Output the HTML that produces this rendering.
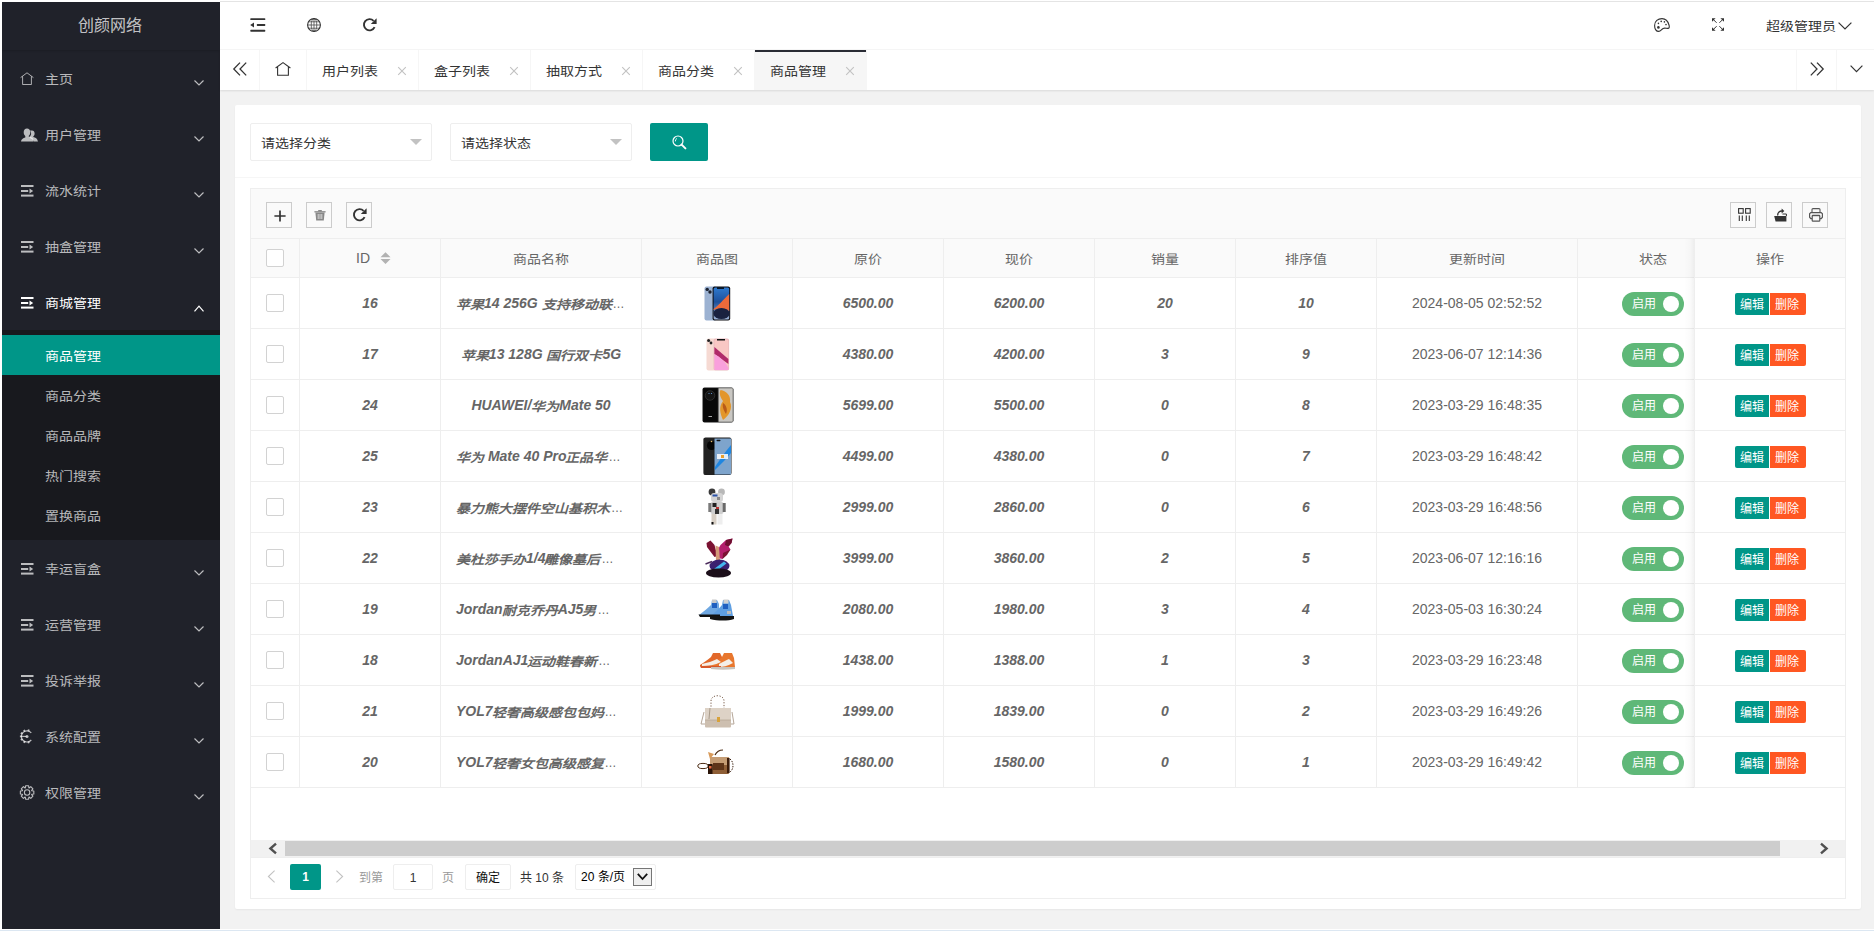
<!DOCTYPE html>
<html lang="zh-CN"><head><meta charset="utf-8"><title>商品管理</title>
<style>
*{box-sizing:border-box;margin:0;padding:0}
html,body{width:1874px;height:931px;overflow:hidden}
body{position:relative;background:#f2f2f2;font-family:'Liberation Sans',sans-serif;font-size:14px;color:#333}
.a{position:absolute}
.c{display:inline-block;line-height:14px;transform:translateY(1px) scaleY(.88);transform-origin:50% 13.6px}
.sw .c,.bt .c,.p12 .c,#logo .c{display:inline;transform:none;line-height:inherit}
svg{position:absolute;overflow:visible}
#side{left:0;top:0;width:220px;height:931px;background:#20222a}
#logo{left:0;top:0;width:220px;height:50px;line-height:52px;text-align:center;font-size:16px;color:rgba(255,255,255,.74);box-shadow:0 1px 2px 0 rgba(0,0,0,.15)}
.nav{left:0;width:220px;height:56px;line-height:56px;padding-left:45px;color:rgba(255,255,255,.7);font-size:14px}
.navw{color:#fff}
#sub{left:0;top:330px;width:220px;height:210px;background:#18191e}
.dd{left:0;width:220px;height:40px;line-height:40px;padding-left:45px;color:rgba(255,255,255,.7)}
.ddon{background:#009688;color:#fff}
#hdr{left:220px;top:0;width:1654px;height:50px;background:#fff;border-bottom:1px solid #f6f6f6}
#tabs{left:220px;top:50px;width:1654px;height:40px;background:#fff;box-shadow:0 1px 2px 0 rgba(0,0,0,.1)}
.tab{top:0;height:40px;line-height:40px;border-right:1px solid #f6f6f6;color:#333;padding-left:15px}
.tabon{background:#f6f6f6}
.tabon:before{content:'';position:absolute;left:0;top:0;width:100%;height:2px;background:#292b34}
.x{position:absolute;right:8px;top:13px;width:16px;height:16px}
#card{left:235px;top:105px;width:1626px;height:804px;background:#fff;border-radius:2px;box-shadow:0 1px 2px 0 rgba(0,0,0,.05)}
.sel{top:123px;width:182px;height:38px;border:1px solid #eee;border-radius:2px;background:#fff;line-height:36px;padding-left:10px;color:#333}
.tri{position:absolute;right:9px;top:15px;width:0;height:0;border-style:solid;border-width:6px 6px 0 6px;border-color:#c2c2c2 transparent transparent transparent}
#sbtn{left:650px;top:123px;width:58px;height:38px;background:#009688;border-radius:2px}
#hline{left:235px;top:177px;width:1626px;height:1px;background:#f6f6f6}
#tv{left:250px;top:188px;width:1596px;height:711px;border:1px solid #eee;background:#fff}
#tool{left:251px;top:189px;width:1594px;height:50px;background:#fafafa;border-bottom:1px solid #eee}
.tb{top:202px;width:26px;height:26px;border:1px solid #ccc}
#thead{left:251px;top:239px;width:1594px;height:39px;background:#fafafa;border-bottom:1px solid #eee;overflow:hidden}
.th,.td{position:absolute;top:0;height:100%;border-right:1px solid #eee;text-align:center;color:#666;white-space:nowrap;overflow:hidden}
.th{line-height:38px}
.row{position:absolute;left:0;width:1629px;height:51px;border-bottom:1px solid #eee;background:#fff}
.td{line-height:50px;font-weight:bold;font-style:italic}
.td.n{font-weight:normal;font-style:normal}
.td .cl{margin-left:-1px}
.el{font-weight:normal;font-style:normal;font-size:12px;letter-spacing:-0.5px;margin-left:1px}
.cb{position:absolute;left:16px;width:18px;height:18px;border:1px solid #d2d2d2;border-radius:2px;background:#fff}
.sw{position:absolute;top:14px;height:24px;width:62px;border-radius:20px;background:#5fb878;color:#fff;font-size:12px;font-style:normal;font-weight:normal;line-height:25px;text-align:left;padding-left:10px}
.sw i{position:absolute;right:5px;top:4px;width:16px;height:16px;border-radius:50%;background:#fff}
.bt{position:absolute;top:15px;height:22px;line-height:24px;font-size:12px;color:#fff;font-style:normal;font-weight:normal;padding:0 5px;border-radius:2px}
#fixr{left:1694px;top:239px;width:151px;height:549px;border-left:1px solid #eee;overflow:hidden;background:#fff}
#fsh{left:1684px;top:239px;width:10px;height:549px;background:linear-gradient(to left,rgba(0,0,0,.05),rgba(0,0,0,.015) 40%,rgba(0,0,0,0))}
#page{left:251px;top:857px;width:1594px;height:41px;border-top:1px solid #eee;background:#fff}
</style></head>
<body>
<div class="a" id="side"></div>
<div class="a" id="logo"><span class="c">创颜网络</span></div>
<div class="a nav" style="top:50px"><span class="c">主页</span></div>
<svg style="left:20px;top:72px" width="14" height="13" viewBox="0 0 14 13" ><path d="M0.6 5.6 L7 0.8 L13.4 5.6 M2.6 4.4 V12.5 H11.4 V4.4" fill="none" stroke="rgba(255,255,255,.7)" stroke-width="0.9"/></svg>
<svg style="left:194px;top:80px" width="10" height="6" viewBox="0 0 10 6" ><path d="M0.5 0.5 L5 5 L9.5 0.5" fill="none" stroke="rgba(255,255,255,.7)" stroke-width="1.2"/></svg>
<div class="a nav" style="top:106px"><span class="c">用户管理</span></div>
<svg style="left:21px;top:128px" width="18" height="14" viewBox="0 0 18 14" ><path fill="rgba(255,255,255,.7)" d="M6 0.5c2 0 3.3 1.6 3.3 3.8 0 1.6-.7 2.9-1.6 3.6v.6c2.3.6 4 1.6 4.5 2.4V13.5H0c.2-2.1 2-3.4 4.3-4V7.9C3.4 7.2 2.7 5.9 2.7 4.3 2.7 2.1 4 .5 6 .5z"/><path fill="rgba(255,255,255,.7)" d="M11 2.5c1.6 0 2.6 1.3 2.6 3 0 1.3-.5 2.3-1.3 2.9v.6c2.1.5 3.5 1.5 3.8 2.3l.9 2.2h-4.5c0-1.3-1.2-2.8-3.7-3.6V8.4c1-.8 1.3-1.9 1.3-2.9 0-1.3-.5-2.3-1.2-2.8.6-.2 1.3-.2 2.1-.2z"/></svg>
<svg style="left:194px;top:136px" width="10" height="6" viewBox="0 0 10 6" ><path d="M0.5 0.5 L5 5 L9.5 0.5" fill="none" stroke="rgba(255,255,255,.7)" stroke-width="1.2"/></svg>
<div class="a nav" style="top:162px"><span class="c">流水统计</span></div>
<svg style="left:21px;top:185px" width="13" height="12" viewBox="0 0 13 12" ><rect x="0" y="0" width="12.5" height="2" fill="rgba(255,255,255,.7)"/><rect x="0" y="5" width="7.2" height="2" fill="rgba(255,255,255,.7)"/><path d="M8.5 3.6 L12.2 6 L8.5 8.4Z" fill="rgba(255,255,255,.7)"/><rect x="0" y="9.6" width="12.5" height="2" fill="rgba(255,255,255,.7)"/></svg>
<svg style="left:194px;top:192px" width="10" height="6" viewBox="0 0 10 6" ><path d="M0.5 0.5 L5 5 L9.5 0.5" fill="none" stroke="rgba(255,255,255,.7)" stroke-width="1.2"/></svg>
<div class="a nav" style="top:218px"><span class="c">抽盒管理</span></div>
<svg style="left:21px;top:241px" width="13" height="12" viewBox="0 0 13 12" ><rect x="0" y="0" width="12.5" height="2" fill="rgba(255,255,255,.7)"/><rect x="0" y="5" width="7.2" height="2" fill="rgba(255,255,255,.7)"/><path d="M8.5 3.6 L12.2 6 L8.5 8.4Z" fill="rgba(255,255,255,.7)"/><rect x="0" y="9.6" width="12.5" height="2" fill="rgba(255,255,255,.7)"/></svg>
<svg style="left:194px;top:248px" width="10" height="6" viewBox="0 0 10 6" ><path d="M0.5 0.5 L5 5 L9.5 0.5" fill="none" stroke="rgba(255,255,255,.7)" stroke-width="1.2"/></svg>
<div class="a nav navw" style="top:274px"><span class="c">商城管理</span></div>
<svg style="left:21px;top:297px" width="13" height="12" viewBox="0 0 13 12" ><rect x="0" y="0" width="12.5" height="2" fill="#fff"/><rect x="0" y="5" width="7.2" height="2" fill="#fff"/><path d="M8.5 3.6 L12.2 6 L8.5 8.4Z" fill="#fff"/><rect x="0" y="9.6" width="12.5" height="2" fill="#fff"/></svg>
<svg style="left:194px;top:305px" width="10" height="7" viewBox="0 0 10 7" ><path d="M0.5 6.3 L5 1.2 L9.5 6.3" fill="none" stroke="#fff" stroke-width="1.2"/></svg>
<div class="a" id="sub"></div>
<div class="a dd ddon" style="top:335px"><span class="c">商品管理</span></div>
<div class="a dd" style="top:375px"><span class="c">商品分类</span></div>
<div class="a dd" style="top:415px"><span class="c">商品品牌</span></div>
<div class="a dd" style="top:455px"><span class="c">热门搜索</span></div>
<div class="a dd" style="top:495px"><span class="c">置换商品</span></div>
<div class="a nav" style="top:540px"><span class="c">幸运盲盒</span></div>
<svg style="left:21px;top:563px" width="13" height="12" viewBox="0 0 13 12" ><rect x="0" y="0" width="12.5" height="2" fill="rgba(255,255,255,.7)"/><rect x="0" y="5" width="7.2" height="2" fill="rgba(255,255,255,.7)"/><path d="M8.5 3.6 L12.2 6 L8.5 8.4Z" fill="rgba(255,255,255,.7)"/><rect x="0" y="9.6" width="12.5" height="2" fill="rgba(255,255,255,.7)"/></svg>
<svg style="left:194px;top:570px" width="10" height="6" viewBox="0 0 10 6" ><path d="M0.5 0.5 L5 5 L9.5 0.5" fill="none" stroke="rgba(255,255,255,.7)" stroke-width="1.2"/></svg>
<div class="a nav" style="top:596px"><span class="c">运营管理</span></div>
<svg style="left:21px;top:619px" width="13" height="12" viewBox="0 0 13 12" ><rect x="0" y="0" width="12.5" height="2" fill="rgba(255,255,255,.7)"/><rect x="0" y="5" width="7.2" height="2" fill="rgba(255,255,255,.7)"/><path d="M8.5 3.6 L12.2 6 L8.5 8.4Z" fill="rgba(255,255,255,.7)"/><rect x="0" y="9.6" width="12.5" height="2" fill="rgba(255,255,255,.7)"/></svg>
<svg style="left:194px;top:626px" width="10" height="6" viewBox="0 0 10 6" ><path d="M0.5 0.5 L5 5 L9.5 0.5" fill="none" stroke="rgba(255,255,255,.7)" stroke-width="1.2"/></svg>
<div class="a nav" style="top:652px"><span class="c">投诉举报</span></div>
<svg style="left:21px;top:675px" width="13" height="12" viewBox="0 0 13 12" ><rect x="0" y="0" width="12.5" height="2" fill="rgba(255,255,255,.7)"/><rect x="0" y="5" width="7.2" height="2" fill="rgba(255,255,255,.7)"/><path d="M8.5 3.6 L12.2 6 L8.5 8.4Z" fill="rgba(255,255,255,.7)"/><rect x="0" y="9.6" width="12.5" height="2" fill="rgba(255,255,255,.7)"/></svg>
<svg style="left:194px;top:682px" width="10" height="6" viewBox="0 0 10 6" ><path d="M0.5 0.5 L5 5 L9.5 0.5" fill="none" stroke="rgba(255,255,255,.7)" stroke-width="1.2"/></svg>
<div class="a nav" style="top:708px"><span class="c">系统配置</span></div>
<svg style="left:20px;top:729px" width="15" height="15" viewBox="0 0 15 15" ><path d="M11.29 3.80 A5.6 5.6 0 1 0 11.29 11.00" fill="none" stroke="rgba(255,255,255,.7)" stroke-width="1.2"/><rect x="6.10" y="0.30" width="1.8" height="1.8" fill="rgba(255,255,255,.7)" transform="rotate(15 7 7.4)"/><rect x="6.10" y="0.30" width="1.8" height="1.8" fill="rgba(255,255,255,.7)" transform="rotate(-25 7 7.4)"/><rect x="6.10" y="0.30" width="1.8" height="1.8" fill="rgba(255,255,255,.7)" transform="rotate(270 7 7.4)"/><rect x="6.10" y="0.30" width="1.8" height="1.8" fill="rgba(255,255,255,.7)" transform="rotate(205 7 7.4)"/><rect x="6.10" y="0.30" width="1.8" height="1.8" fill="rgba(255,255,255,.7)" transform="rotate(165 7 7.4)"/><rect x="6.10" y="0.30" width="1.8" height="1.8" fill="rgba(255,255,255,.7)" transform="rotate(-60 7 7.4)"/><rect x="6.10" y="0.30" width="1.8" height="1.8" fill="rgba(255,255,255,.7)" transform="rotate(240 7 7.4)"/><path d="M1.4 7.4 H6.5" stroke="rgba(255,255,255,.7)" stroke-width="1.1"/><circle cx="7" cy="7.4" r="1.5" fill="rgba(255,255,255,.7)"/></svg>
<svg style="left:194px;top:738px" width="10" height="6" viewBox="0 0 10 6" ><path d="M0.5 0.5 L5 5 L9.5 0.5" fill="none" stroke="rgba(255,255,255,.7)" stroke-width="1.2"/></svg>
<div class="a nav" style="top:764px"><span class="c">权限管理</span></div>
<svg style="left:20px;top:785px" width="15" height="15" viewBox="0 0 15 15" ><path d="M5.34 2.82 L5.59 0.77 L8.61 0.77 L8.86 2.82 L9.16 2.95 L10.80 1.67 L12.93 3.80 L11.65 5.44 L11.78 5.74 L13.83 5.99 L13.83 9.01 L11.78 9.26 L11.65 9.56 L12.93 11.20 L10.80 13.33 L9.16 12.05 L8.86 12.18 L8.61 14.23 L5.59 14.23 L5.34 12.18 L5.04 12.05 L3.40 13.33 L1.27 11.20 L2.55 9.56 L2.42 9.26 L0.37 9.01 L0.37 5.99 L2.42 5.74 L2.55 5.44 L1.27 3.80 L3.40 1.67 L5.04 2.95Z" fill="none" stroke="rgba(255,255,255,.7)" stroke-width="1.1" stroke-linejoin="round"/><circle cx="7.1" cy="7.5" r="2.7" fill="none" stroke="rgba(255,255,255,.7)" stroke-width="1.1"/></svg>
<svg style="left:194px;top:794px" width="10" height="6" viewBox="0 0 10 6" ><path d="M0.5 0.5 L5 5 L9.5 0.5" fill="none" stroke="rgba(255,255,255,.7)" stroke-width="1.2"/></svg>
<div class="a" id="hdr"></div>
<svg style="left:250px;top:18px" width="16" height="14" viewBox="0 0 16 14" ><rect x="0.3" y="0.2" width="15" height="1.9" rx="0.6" fill="#333"/><rect x="6.8" y="6" width="8.5" height="1.9" rx="0.6" fill="#333"/><path d="M0.2 7 L4 4.6 V9.4Z" fill="#333"/><rect x="0.3" y="11.8" width="15" height="1.9" rx="0.6" fill="#333"/></svg>
<svg style="left:307px;top:18px" width="14" height="14" viewBox="0 0 14 14" ><circle cx="7" cy="7" r="6.4" fill="none" stroke="#333" stroke-width="1.1"/><ellipse cx="7" cy="7" rx="2.8" ry="6.4" fill="none" stroke="#333" stroke-width="0.7"/><path d="M7 0.6V13.4 M0.6 7H13.4 M1.6 3.8H12.4 M1.6 10.2H12.4" stroke="#333" stroke-width="0.7"/></svg>
<svg style="left:363px;top:18px" width="14" height="14" viewBox="0 0 14 14" ><path d="M11.6 9.2 A5.6 5.6 0 1 1 10.6 2.9" fill="none" stroke="#333" stroke-width="1.9"/><path d="M13.6 0.2 V6 H7.8Z" fill="#333"/></svg>
<svg style="left:1654px;top:18px" width="16" height="14" viewBox="0 0 16 14" ><path d="M8 0.6 C4 0.6 0.6 3.2 0.6 7.4 C0.6 11 2.4 13.4 4.8 13.4 C6.6 13.4 7.4 11.4 9.2 10.4 C10.8 9.6 12.6 10.6 14.2 10.4 C15.6 10.2 15.4 8.4 15 7 C14 3.2 11.6 0.6 8 0.6Z" fill="none" stroke="#333" stroke-width="1.1"/><circle cx="4.4" cy="9.4" r="1.3" fill="#333"/><circle cx="4.4" cy="5.4" r="0.8" fill="#333"/><circle cx="7.2" cy="3.4" r="0.8" fill="#333"/><circle cx="10.4" cy="3.9" r="0.8" fill="#333"/><circle cx="12" cy="6.6" r="0.8" fill="#333"/></svg>
<svg style="left:1712px;top:18px" width="12" height="13" viewBox="0 0 12 13" ><path d="M0 0.2H3.6L0 3.8Z M12 0.2H8.4L12 3.8Z M0 12.8H3.6L0 9.2Z M12 12.8H8.4L12 9.2Z" fill="#333"/><path d="M0.8 1L4.6 4.8 M11.2 1L7.4 4.8 M0.8 12L4.6 8.2 M11.2 12L7.4 8.2" stroke="#333" stroke-width="1"/></svg>
<div class="a" style="left:1766px;top:17px;line-height:16px;color:#333"><span class="c">超级管理员</span></div>
<svg style="left:1838px;top:22px" width="14" height="8" viewBox="0 0 14 8" ><path d="M0.6 0.6 L7 7 L13.4 0.6" fill="none" stroke="#333" stroke-width="1.2"/></svg>
<div class="a" id="tabs"></div>
<div class="a" style="left:259px;top:50px;width:1px;height:40px;background:#f6f6f6"></div>
<svg style="left:233px;top:62px" width="14" height="14" viewBox="0 0 14 14" ><path d="M7 0.6 L0.8 7 L7 13.4 M13.2 0.6 L7 7 L13.2 13.4" fill="none" stroke="#333" stroke-width="1.3"/></svg>
<div class="a tab" style="left:260px;top:50px;width:47px"></div>
<svg style="left:275px;top:62px" width="16" height="14" viewBox="0 0 16 14" ><path d="M0.6 6 L8 0.6 L15.4 6 M2.6 4.8 V13.3 H13.4 V4.8" fill="none" stroke="#333" stroke-width="1.1"/></svg>
<div class="a tab" style="left:307px;top:50px;width:112px"><span class="c">用户列表</span><svg class="x" viewBox="0 0 16 16" style="right:8px;left:auto"><path d="M4.2 4.2 L11.8 11.8 M11.8 4.2 L4.2 11.8" stroke="#c2c2c2" stroke-width="1.1"/></svg></div>
<div class="a tab" style="left:419px;top:50px;width:112px"><span class="c">盒子列表</span><svg class="x" viewBox="0 0 16 16" style="right:8px;left:auto"><path d="M4.2 4.2 L11.8 11.8 M11.8 4.2 L4.2 11.8" stroke="#c2c2c2" stroke-width="1.1"/></svg></div>
<div class="a tab" style="left:531px;top:50px;width:112px"><span class="c">抽取方式</span><svg class="x" viewBox="0 0 16 16" style="right:8px;left:auto"><path d="M4.2 4.2 L11.8 11.8 M11.8 4.2 L4.2 11.8" stroke="#c2c2c2" stroke-width="1.1"/></svg></div>
<div class="a tab" style="left:643px;top:50px;width:112px"><span class="c">商品分类</span><svg class="x" viewBox="0 0 16 16" style="right:8px;left:auto"><path d="M4.2 4.2 L11.8 11.8 M11.8 4.2 L4.2 11.8" stroke="#c2c2c2" stroke-width="1.1"/></svg></div>
<div class="a tab tabon" style="left:755px;top:50px;width:112px"><span class="c">商品管理</span><svg class="x" viewBox="0 0 16 16" style="right:8px;left:auto"><path d="M4.2 4.2 L11.8 11.8 M11.8 4.2 L4.2 11.8" stroke="#c2c2c2" stroke-width="1.1"/></svg></div>
<div class="a" style="left:1796px;top:50px;width:1px;height:40px;background:#f6f6f6"></div>
<div class="a" style="left:1836px;top:50px;width:1px;height:40px;background:#f6f6f6"></div>
<svg style="left:1810px;top:62px" width="14" height="14" viewBox="0 0 14 14" ><path d="M0.8 0.6 L7 7 L0.8 13.4 M7 0.6 L13.2 7 L7 13.4" fill="none" stroke="#333" stroke-width="1.3"/></svg>
<svg style="left:1850px;top:65px" width="13" height="8" viewBox="0 0 13 8" ><path d="M0.6 0.6 L6.5 6.6 L12.4 0.6" fill="none" stroke="#333" stroke-width="1.2"/></svg>
<div class="a" id="card"></div>
<div class="a sel" style="left:250px"><span class="c">请选择分类</span><i class="tri"></i></div>
<div class="a sel" style="left:450px"><span class="c">请选择状态</span><i class="tri"></i></div>
<div class="a" id="sbtn"></div>
<svg style="left:672px;top:135px" width="15" height="15" viewBox="0 0 15 15" ><circle cx="6" cy="6" r="5" fill="none" stroke="#fff" stroke-width="1.2"/><path d="M9.6 9.6 L13.4 13.4" stroke="#fff" stroke-width="2" stroke-linecap="round"/><path d="M3.4 6.4 A3 3 0 0 1 5 3.4" fill="none" stroke="#fff" stroke-width="0.9"/></svg>
<div class="a" id="hline"></div>
<div class="a" id="tv"></div>
<div class="a" id="tool"></div>
<div class="a tb" style="left:266px"></div>
<div class="a tb" style="left:306px"></div>
<div class="a tb" style="left:346px"></div>
<div class="a tb" style="left:1730px"></div>
<div class="a tb" style="left:1766px"></div>
<div class="a tb" style="left:1802px"></div>
<svg style="left:274px;top:210px" width="12" height="12" viewBox="0 0 12 12" ><path d="M6 0.4V11.6 M0.4 6H11.6" stroke="#333" stroke-width="1.7"/></svg>
<svg style="left:314px;top:210px" width="12" height="11" viewBox="0 0 12 11" ><path d="M0.4 1.8H11.6" stroke="#888" stroke-width="1.3"/><rect x="4.2" y="0" width="3.6" height="1.4" fill="#888"/><path d="M1.4 2.6 L2.2 10.4 H9.8 L10.6 2.6Z" fill="#888"/><path d="M4.2 4V9 M6 4V9 M7.8 4V9" stroke="#fafafa" stroke-width="0.7"/></svg>
<svg style="left:353px;top:208px" width="14" height="14" viewBox="0 0 14 14" ><path d="M11.6 9.2 A5.6 5.6 0 1 1 10.6 2.9" fill="none" stroke="#333" stroke-width="1.9"/><path d="M13.6 0.2 V6 H7.8Z" fill="#333"/></svg>
<svg style="left:1738px;top:208px" width="13" height="13" viewBox="0 0 13 13" ><rect x="0.6" y="0.6" width="4.6" height="4.6" fill="none" stroke="#333" stroke-width="1.1"/><rect x="7.6" y="0.6" width="4.6" height="4.6" fill="none" stroke="#333" stroke-width="1.1"/><path d="M1.3 7.4V13 M4.3 7.4V13 M8.3 7.4V13 M11.3 7.4V13" stroke="#333" stroke-width="1.1"/></svg>
<svg style="left:1774px;top:208px" width="13" height="14" viewBox="0 0 13 14" ><path d="M0.2 8 H12.4 V13.4 H1.6Z" fill="#333"/><path d="M8.4 6 H12.4 V8" fill="none" stroke="#333" stroke-width="1"/><path d="M3.6 7.6 C3.6 4 5.8 3 8 3" fill="none" stroke="#333" stroke-width="1.3"/><path d="M7.6 0.6 L10.4 3 L7.6 5.4Z" fill="#333"/></svg>
<svg style="left:1809px;top:208px" width="14" height="14" viewBox="0 0 14 14" ><path d="M3 4.6 V1.6 Q3 0.6 4 0.6 H10 Q11 0.6 11 1.6 V4.6" fill="none" stroke="#555" stroke-width="1.1"/><path d="M3 10.6 H1.8 L0.6 9.2 V5.8 L1.8 4.6 H12.2 L13.4 5.8 V9.2 L12.2 10.6 H11" fill="none" stroke="#555" stroke-width="1.2"/><rect x="3.2" y="7.4" width="7.6" height="5.8" rx="0.8" fill="none" stroke="#555" stroke-width="1.2"/><rect x="3" y="7" width="8" height="1.2" fill="#555"/></svg>
<div class="a" id="thead"><div class="th" style="left:0px;width:49px"><i class="cb" style="left:15px;top:10px"></i></div><div class="th" style="left:49px;width:141px"><span style="position:relative;left:-7px">ID</span><svg style="left:80px;top:13px" width="11" height="13"><path d="M0.5 5.2 L5.5 0.2 L10.5 5.2Z M0.5 7 L5.5 12 L10.5 7Z" fill="#b2b2b2"/></svg></div><div class="th" style="left:190px;width:201px"><span class="c">商品名称</span></div><div class="th" style="left:391px;width:151px"><span class="c">商品图</span></div><div class="th" style="left:542px;width:151px"><span class="c">原价</span></div><div class="th" style="left:693px;width:151px"><span class="c">现价</span></div><div class="th" style="left:844px;width:141px"><span class="c">销量</span></div><div class="th" style="left:985px;width:141px"><span class="c">排序值</span></div><div class="th" style="left:1126px;width:201px"><span class="c">更新时间</span></div><div class="th" style="left:1327px;width:151px"><span class="c">状态</span></div></div>
<div class="a" style="left:251px;top:278px;width:1594px;height:562px;overflow:hidden"><div class="row" style="top:0px"><div class="td" style="left:0px;width:49px"><i class="cb" style="left:15px;top:16px"></i></div><div class="td" style="left:49px;width:141px">16</div><div class="td" style="left:190px;width:201px;text-align:left;padding-left:15px"><span class="c">苹果</span>14 256G <span class="c">支持移动联</span><span class="el">…</span></div><div class="td" style="left:391px;width:151px"><svg style="left:62px;top:8px" width="27" height="35"><defs><linearGradient id="g0" x1="0" y1="0" x2="0" y2="1"><stop offset="0" stop-color="#2f7ad0"/><stop offset=".45" stop-color="#1d4f9a"/><stop offset="1" stop-color="#9fb4d6"/></linearGradient></defs><rect x="0.5" y="0.5" width="12" height="34" rx="2" fill="#9cb2d2"/><circle cx="3.2" cy="3.4" r="1.7" fill="#1c2230"/><circle cx="6" cy="6" r="1.7" fill="#1c2230"/><rect x="8.6" y="0.5" width="17.6" height="34" rx="2" fill="#0c0c10"/><rect x="9.6" y="1.4" width="15.6" height="32.2" rx="1.5" fill="url(#g0)"/><path d="M9.6 23 C14 20 19 14 25.2 8 V25 C20 22 15 22 9.6 24Z" fill="#ee6a3a"/><ellipse cx="17.5" cy="27.5" rx="8" ry="5.5" fill="#1a2240"/><rect x="13" y="1.4" width="7" height="1.4" fill="#000"/></svg></div><div class="td" style="left:542px;width:151px">6500.00</div><div class="td" style="left:693px;width:151px">6200.00</div><div class="td" style="left:844px;width:141px">20</div><div class="td" style="left:985px;width:141px">10</div><div class="td n" style="left:1126px;width:201px">2024-08-05 02:52:52</div><div class="td" style="left:1327px;width:151px"><div class="sw" style="left:44px"><span class="c">启用</span><i></i></div></div></div><div class="row" style="top:51px"><div class="td" style="left:0px;width:49px"><i class="cb" style="left:15px;top:16px"></i></div><div class="td" style="left:49px;width:141px">17</div><div class="td" style="left:190px;width:201px"><span class="c">苹果</span>13 128G <span class="c">国行双卡</span>5G</div><div class="td" style="left:391px;width:151px"><svg style="left:64px;top:9px" width="24" height="33"><rect x="0.5" y="0.5" width="10" height="32" rx="2" fill="#f6dad3"/><circle cx="2.6" cy="2.6" r="1.5" fill="#222"/><circle cx="5" cy="5" r="1.4" fill="#222"/><rect x="7.6" y="0.5" width="15.5" height="32" rx="2" fill="#e8b8bd"/><rect x="8.4" y="1.6" width="14" height="30.5" rx="1.5" fill="#f9c7c4"/><path d="M8.4 9 L22.4 21 V26 L8.4 16Z" fill="#b02a6a"/><path d="M8.4 16 C14 19 20 24 22.4 30 V32 H8.4Z" fill="#f9a0dc"/><rect x="11" y="1" width="8" height="1.5" fill="#111"/></svg></div><div class="td" style="left:542px;width:151px">4380.00</div><div class="td" style="left:693px;width:151px">4200.00</div><div class="td" style="left:844px;width:141px">3</div><div class="td" style="left:985px;width:141px">9</div><div class="td n" style="left:1126px;width:201px">2023-06-07 12:14:36</div><div class="td" style="left:1327px;width:151px"><div class="sw" style="left:44px"><span class="c">启用</span><i></i></div></div></div><div class="row" style="top:102px"><div class="td" style="left:0px;width:49px"><i class="cb" style="left:15px;top:16px"></i></div><div class="td" style="left:49px;width:141px">24</div><div class="td" style="left:190px;width:201px">HUAWEI/<span class="c">华为</span>Mate 50</div><div class="td" style="left:391px;width:151px"><svg style="left:60px;top:7px" width="32" height="36"><rect x="0.5" y="0.5" width="31" height="35" rx="2" fill="#1a1a1a"/><rect x="1.2" y="1.2" width="14.3" height="33.6" fill="#080808"/><circle cx="8" cy="8.5" r="4.8" fill="#151515" stroke="#3a3a3a" stroke-width="0.7"/><circle cx="7" cy="6.5" r="0.6" fill="#6aa0e0"/><circle cx="9.5" cy="6.5" r="0.6" fill="#6aa0e0"/><rect x="6.5" y="29" width="3.5" height="1" fill="#aaa"/><rect x="16.5" y="1.2" width="14.3" height="33.6" fill="#c9c7c3"/><path d="M18.5 3 C25 4 29 9 28 15 C31 21 27 29 21 33 C18 26 16.5 20 21 14 C18 10 17 6 18.5 3Z" fill="#e3962a"/><path d="M21 16 C24 18 26 22 24 27 C22 24 20 20 21 16Z" fill="#b85a18"/></svg></div><div class="td" style="left:542px;width:151px">5699.00</div><div class="td" style="left:693px;width:151px">5500.00</div><div class="td" style="left:844px;width:141px">0</div><div class="td" style="left:985px;width:141px">8</div><div class="td n" style="left:1126px;width:201px">2023-03-29 16:48:35</div><div class="td" style="left:1327px;width:151px"><div class="sw" style="left:44px"><span class="c">启用</span><i></i></div></div></div><div class="row" style="top:153px"><div class="td" style="left:0px;width:49px"><i class="cb" style="left:15px;top:16px"></i></div><div class="td" style="left:49px;width:141px">25</div><div class="td" style="left:190px;width:201px;text-align:left;padding-left:15px"><span class="c">华为</span> Mate 40 Pro<span class="c cl">正品华</span><span class="el">…</span></div><div class="td" style="left:391px;width:151px"><svg style="left:61px;top:6px" width="29" height="38"><rect x="0.5" y="0.5" width="28" height="37.5" rx="2" fill="#1c1c1c"/><rect x="0.8" y="1" width="10" height="36.5" fill="#222"/><circle cx="8.5" cy="8.5" r="4.6" fill="#050505"/><circle cx="8.5" cy="4.5" r="0.8" fill="#e8c070"/><rect x="11.5" y="1.5" width="16.5" height="36" fill="#7ea4cc"/><path d="M12 30 C16 24 22 15 28 8 V16 C24 21 18 27 12 33Z" fill="#1f86e0"/><rect x="14" y="17" width="11" height="5" fill="#fff" opacity=".85"/><rect x="18" y="18" width="3" height="3" fill="#e8a030"/><rect x="13.5" y="2.8" width="4" height="1.5" rx=".7" fill="#111"/></svg></div><div class="td" style="left:542px;width:151px">4499.00</div><div class="td" style="left:693px;width:151px">4380.00</div><div class="td" style="left:844px;width:141px">0</div><div class="td" style="left:985px;width:141px">7</div><div class="td n" style="left:1126px;width:201px">2023-03-29 16:48:42</div><div class="td" style="left:1327px;width:151px"><div class="sw" style="left:44px"><span class="c">启用</span><i></i></div></div></div><div class="row" style="top:204px"><div class="td" style="left:0px;width:49px"><i class="cb" style="left:15px;top:16px"></i></div><div class="td" style="left:49px;width:141px">23</div><div class="td" style="left:190px;width:201px;text-align:left;padding-left:15px"><span class="c">暴力熊大摆件空山基积木</span><span class="el">…</span></div><div class="td" style="left:391px;width:151px"><svg style="left:66px;top:6px" width="18" height="37"><circle cx="4" cy="4" r="3.4" fill="#3a3a3a"/><circle cx="13.5" cy="4" r="3.4" fill="#b8b8b8"/><rect x="3" y="5" width="12" height="9" rx="3" fill="#d4d4d4"/><rect x="4.5" y="6.5" width="5" height="2" fill="#2a52a8"/><rect x="9" y="9" width="3" height="3" fill="#888"/><rect x="2.5" y="14" width="13" height="12" rx="2" fill="#cfcfcf"/><rect x="4.5" y="15" width="4" height="4" fill="#222"/><rect x="8" y="19" width="3" height="3" fill="#b33"/><rect x="0.3" y="15" width="3" height="9" fill="#7a7a7a"/><rect x="14.7" y="15" width="3" height="9" fill="#6a6a6a"/><rect x="3.5" y="26" width="5" height="10.5" fill="#d8d0c6"/><rect x="9.5" y="26" width="5" height="10.5" fill="#eee"/><rect x="7" y="21" width="4" height="5" fill="#333"/><rect x="3.5" y="34" width="2" height="2.5" fill="#111"/></svg></div><div class="td" style="left:542px;width:151px">2999.00</div><div class="td" style="left:693px;width:151px">2860.00</div><div class="td" style="left:844px;width:141px">0</div><div class="td" style="left:985px;width:141px">6</div><div class="td n" style="left:1126px;width:201px">2023-03-29 16:48:56</div><div class="td" style="left:1327px;width:151px"><div class="sw" style="left:44px"><span class="c">启用</span><i></i></div></div></div><div class="row" style="top:255px"><div class="td" style="left:0px;width:49px"><i class="cb" style="left:15px;top:16px"></i></div><div class="td" style="left:49px;width:141px">22</div><div class="td" style="left:190px;width:201px;text-align:left;padding-left:15px"><span class="c">美杜莎手办</span>1/4<span class="c cl">雕像墓后</span><span class="el">…</span></div><div class="td" style="left:391px;width:151px"><svg style="left:63px;top:5px" width="28" height="41"><path d="M1.5 5 L5.5 2.5 L9.5 7 L12.5 18 L9.5 19 L5 13 L2 9Z" fill="#7a1232"/><path d="M11 15 L15.5 7 L21 2 L27.5 0.5 L26.5 5 L23.5 8.5 L25.5 11.5 L21 16 L17.5 21 L13 20Z" fill="#b31f6c"/><path d="M21 2 L27.5 0.5 L26.5 5 L23.5 8.5 L20 7Z" fill="#6e0f30"/><path d="M18 15 L25.5 11.5 L22 17 L17.5 21Z" fill="#7a1232"/><path d="M10.5 7.5 L14 9 L15 23 L11 23Z" fill="#d49a78"/><ellipse cx="14.5" cy="28" rx="10" ry="6.5" fill="#3b2170"/><path d="M9 31 L19 23.5 L21.5 25.5 L11.5 33Z" fill="#42b6ee"/><ellipse cx="13.5" cy="35" rx="12.5" ry="4.5" fill="#1c0f1a"/><path d="M0.5 26 L7 23.5" stroke="#4a2a5a" stroke-width="1.4"/></svg></div><div class="td" style="left:542px;width:151px">3999.00</div><div class="td" style="left:693px;width:151px">3860.00</div><div class="td" style="left:844px;width:141px">2</div><div class="td" style="left:985px;width:141px">5</div><div class="td n" style="left:1126px;width:201px">2023-06-07 12:16:16</div><div class="td" style="left:1327px;width:151px"><div class="sw" style="left:44px"><span class="c">启用</span><i></i></div></div></div><div class="row" style="top:306px"><div class="td" style="left:0px;width:49px"><i class="cb" style="left:15px;top:16px"></i></div><div class="td" style="left:49px;width:141px">19</div><div class="td" style="left:190px;width:201px;text-align:left;padding-left:15px">Jordan<span class="c cl">耐克乔丹</span>AJ5<span class="c cl">男</span><span class="el">…</span></div><div class="td" style="left:391px;width:151px"><svg style="left:56px;top:15px" width="37" height="23"><path d="M1 16 C6 12 10 9 13 6 L14 1 H19 L21 5 V16 Z" fill="#6fa8e2"/><path d="M12 18 C17 13 21 10 24 6 L25 1 H31 L33 6 L35 17Z" fill="#5f9fe2"/><rect x="14" y="0.5" width="4.5" height="4" fill="#c8c8c8"/><rect x="25.5" y="0.5" width="5" height="4" fill="#cfcfcf"/><rect x="14" y="4" width="5" height="5" fill="#1f5fc0"/><rect x="25" y="5" width="5" height="5" fill="#1f5fc0"/><rect x="29" y="12" width="4" height="3" fill="#bbb"/><path d="M0.5 15.5 H22 V18 H2Z" fill="#111"/><path d="M12 17 H36 V20 C30 22 20 22 12 20Z" fill="#141414"/></svg></div><div class="td" style="left:542px;width:151px">2080.00</div><div class="td" style="left:693px;width:151px">1980.00</div><div class="td" style="left:844px;width:141px">3</div><div class="td" style="left:985px;width:141px">4</div><div class="td n" style="left:1126px;width:201px">2023-05-03 16:30:24</div><div class="td" style="left:1327px;width:151px"><div class="sw" style="left:44px"><span class="c">启用</span><i></i></div></div></div><div class="row" style="top:357px"><div class="td" style="left:0px;width:49px"><i class="cb" style="left:15px;top:16px"></i></div><div class="td" style="left:49px;width:141px">18</div><div class="td" style="left:190px;width:201px;text-align:left;padding-left:15px">JordanAJ1<span class="c cl">运动鞋春新</span><span class="el">…</span></div><div class="td" style="left:391px;width:151px"><svg style="left:57px;top:17px" width="37" height="19"><path d="M1 13 C5 10 9 8 12 5 L14 1 H21 L23 5 V14 H1Z" fill="#e2682a"/><path d="M12 14 C16 11 20 8 23 5 L25 1 H33 L35 6 L36 15 H12Z" fill="#e8772e"/><path d="M3 12 C8 11 14 9 18 7 L22 10 C16 13 9 14 3 14Z" fill="#f4efe8"/><path d="M20 12 C24 10 27 8 30 7 L34 11 C28 14 24 15 20 15Z" fill="#f4efe8"/><path d="M1 14 H22 V16 H2Z" fill="#d8582a"/><path d="M12 15 H36 V17 C28 18 20 18 12 17Z" fill="#c9c4bd"/></svg></div><div class="td" style="left:542px;width:151px">1438.00</div><div class="td" style="left:693px;width:151px">1388.00</div><div class="td" style="left:844px;width:141px">1</div><div class="td" style="left:985px;width:141px">3</div><div class="td n" style="left:1126px;width:201px">2023-03-29 16:23:48</div><div class="td" style="left:1327px;width:151px"><div class="sw" style="left:44px"><span class="c">启用</span><i></i></div></div></div><div class="row" style="top:408px"><div class="td" style="left:0px;width:49px"><i class="cb" style="left:15px;top:16px"></i></div><div class="td" style="left:49px;width:141px">21</div><div class="td" style="left:190px;width:201px;text-align:left;padding-left:15px">YOL7<span class="c cl">轻奢高级感包包妈</span><span class="el">…</span></div><div class="td" style="left:391px;width:151px"><svg style="left:58px;top:7px" width="35" height="35"><path d="M11 22 V8 C11 1 24 1 24 8 V15" fill="none" stroke="#6a4a36" stroke-width="0.9" stroke-dasharray="1.2 1.6"/><rect x="5" y="15" width="26" height="19.5" rx="1" fill="#cdbfb0"/><rect x="5" y="15" width="26" height="12" fill="#ddd2c6"/><path d="M5 27 H31" stroke="#b8a898" stroke-width="0.8"/><rect x="17" y="24" width="3" height="5" fill="#d8a23a"/><path d="M4 19 L1 31 H5 M32 19 L34 31 H31" fill="none" stroke="#b5a698" stroke-width="1"/><path d="M10 15 L9 26" stroke="#a89a8a" stroke-width="1"/></svg></div><div class="td" style="left:542px;width:151px">1999.00</div><div class="td" style="left:693px;width:151px">1839.00</div><div class="td" style="left:844px;width:141px">0</div><div class="td" style="left:985px;width:141px">2</div><div class="td n" style="left:1126px;width:201px">2023-03-29 16:49:26</div><div class="td" style="left:1327px;width:151px"><div class="sw" style="left:44px"><span class="c">启用</span><i></i></div></div></div><div class="row" style="top:459px"><div class="td" style="left:0px;width:49px"><i class="cb" style="left:15px;top:16px"></i></div><div class="td" style="left:49px;width:141px">20</div><div class="td" style="left:190px;width:201px;text-align:left;padding-left:15px">YOL7<span class="c cl">轻奢女包高级感复</span><span class="el">…</span></div><div class="td" style="left:391px;width:151px"><svg style="left:55px;top:12px" width="41" height="27"><ellipse cx="6" cy="17" rx="5.2" ry="2.6" fill="none" stroke="#4a2a12" stroke-width="1"/><path d="M18 6 C20 2 23 1 26 1" fill="none" stroke="#4a2a12" stroke-width="1.2"/><path d="M33 10 C37 13 37 20 33 23" fill="none" stroke="#3a1f0f" stroke-width="1" stroke-dasharray="1.4 1.2"/><rect x="13" y="8" width="19" height="17" rx="1" fill="#8e5e36"/><rect x="13" y="8" width="19" height="8" fill="#c49c74"/><rect x="16" y="14" width="11" height="7" fill="#5e3418"/><path d="M11 3 L13 10 L17 5Z" fill="#d89a5a"/><rect x="11" y="15" width="4.5" height="10" fill="#2a1408"/><rect x="12" y="17" width="2.5" height="2.5" fill="#e86a40"/><rect x="30" y="9" width="2.6" height="15" fill="#3a1a08"/></svg></div><div class="td" style="left:542px;width:151px">1680.00</div><div class="td" style="left:693px;width:151px">1580.00</div><div class="td" style="left:844px;width:141px">0</div><div class="td" style="left:985px;width:141px">1</div><div class="td n" style="left:1126px;width:201px">2023-03-29 16:49:42</div><div class="td" style="left:1327px;width:151px"><div class="sw" style="left:44px"><span class="c">启用</span><i></i></div></div></div></div>
<div class="a" id="fsh"></div><div class="a" id="fixr"><div class="a" style="left:0;top:0;width:150px;height:39px;background:#fafafa;border-bottom:1px solid #eee;line-height:38px;text-align:center;color:#666"><span class="c">操作</span></div><div class="a" style="left:0;top:39px;width:150px;height:51px;border-bottom:1px solid #eee;background:#fff"><span class="bt" style="left:40px;background:#009688;border-radius:2px 0 0 2px"><span class="c">编辑</span></span><span class="bt" style="left:75px;width:36px;background:#ff5722;border-radius:0 2px 2px 0"><span class="c">删除</span></span></div><div class="a" style="left:0;top:90px;width:150px;height:51px;border-bottom:1px solid #eee;background:#fff"><span class="bt" style="left:40px;background:#009688;border-radius:2px 0 0 2px"><span class="c">编辑</span></span><span class="bt" style="left:75px;width:36px;background:#ff5722;border-radius:0 2px 2px 0"><span class="c">删除</span></span></div><div class="a" style="left:0;top:141px;width:150px;height:51px;border-bottom:1px solid #eee;background:#fff"><span class="bt" style="left:40px;background:#009688;border-radius:2px 0 0 2px"><span class="c">编辑</span></span><span class="bt" style="left:75px;width:36px;background:#ff5722;border-radius:0 2px 2px 0"><span class="c">删除</span></span></div><div class="a" style="left:0;top:192px;width:150px;height:51px;border-bottom:1px solid #eee;background:#fff"><span class="bt" style="left:40px;background:#009688;border-radius:2px 0 0 2px"><span class="c">编辑</span></span><span class="bt" style="left:75px;width:36px;background:#ff5722;border-radius:0 2px 2px 0"><span class="c">删除</span></span></div><div class="a" style="left:0;top:243px;width:150px;height:51px;border-bottom:1px solid #eee;background:#fff"><span class="bt" style="left:40px;background:#009688;border-radius:2px 0 0 2px"><span class="c">编辑</span></span><span class="bt" style="left:75px;width:36px;background:#ff5722;border-radius:0 2px 2px 0"><span class="c">删除</span></span></div><div class="a" style="left:0;top:294px;width:150px;height:51px;border-bottom:1px solid #eee;background:#fff"><span class="bt" style="left:40px;background:#009688;border-radius:2px 0 0 2px"><span class="c">编辑</span></span><span class="bt" style="left:75px;width:36px;background:#ff5722;border-radius:0 2px 2px 0"><span class="c">删除</span></span></div><div class="a" style="left:0;top:345px;width:150px;height:51px;border-bottom:1px solid #eee;background:#fff"><span class="bt" style="left:40px;background:#009688;border-radius:2px 0 0 2px"><span class="c">编辑</span></span><span class="bt" style="left:75px;width:36px;background:#ff5722;border-radius:0 2px 2px 0"><span class="c">删除</span></span></div><div class="a" style="left:0;top:396px;width:150px;height:51px;border-bottom:1px solid #eee;background:#fff"><span class="bt" style="left:40px;background:#009688;border-radius:2px 0 0 2px"><span class="c">编辑</span></span><span class="bt" style="left:75px;width:36px;background:#ff5722;border-radius:0 2px 2px 0"><span class="c">删除</span></span></div><div class="a" style="left:0;top:447px;width:150px;height:51px;border-bottom:1px solid #eee;background:#fff"><span class="bt" style="left:40px;background:#009688;border-radius:2px 0 0 2px"><span class="c">编辑</span></span><span class="bt" style="left:75px;width:36px;background:#ff5722;border-radius:0 2px 2px 0"><span class="c">删除</span></span></div><div class="a" style="left:0;top:498px;width:150px;height:51px;border-bottom:1px solid #eee;background:#fff"><span class="bt" style="left:40px;background:#009688;border-radius:2px 0 0 2px"><span class="c">编辑</span></span><span class="bt" style="left:75px;width:36px;background:#ff5722;border-radius:0 2px 2px 0"><span class="c">删除</span></span></div></div>
<div class="a" style="left:251px;top:840px;width:1594px;height:17px;background:#f1f1f1"></div>
<div class="a" style="left:285px;top:841px;width:1495px;height:15px;background:#cdcdcd"></div>
<svg style="left:268px;top:843px" width="9" height="11" viewBox="0 0 9 11" ><path d="M8 0.6 L2.4 5.5 L8 10.4" fill="none" stroke="#505050" stroke-width="2.4"/></svg>
<svg style="left:1820px;top:843px" width="9" height="11" viewBox="0 0 9 11" ><path d="M1 0.6 L6.6 5.5 L1 10.4" fill="none" stroke="#505050" stroke-width="2.4"/></svg>
<div class="a" id="page"></div>
<svg style="left:267px;top:870px" width="9" height="13" viewBox="0 0 9 13" ><path d="M7.6 0.6 L1.4 6.5 L7.6 12.4" fill="none" stroke="#c2c2c2" stroke-width="1.1"/></svg>
<div class="a" style="left:290px;top:864px;width:31px;height:26px;background:#009688;border-radius:2px;color:#fff;font-size:12px;line-height:26px;text-align:center;font-weight:bold">1</div>
<svg style="left:335px;top:870px" width="9" height="13" viewBox="0 0 9 13" ><path d="M1.4 0.6 L7.6 6.5 L1.4 12.4" fill="none" stroke="#c2c2c2" stroke-width="1.1"/></svg>
<div class="a p12" style="left:359px;top:865px;line-height:26px;font-size:12px;color:#999"><span class="c">到第</span></div>
<div class="a" style="left:393px;top:864px;width:40px;height:26px;border:1px solid #eee;border-radius:2px;text-align:center;line-height:26px;font-size:12px;color:#333;background:#fff">1</div>
<div class="a p12" style="left:442px;top:865px;line-height:26px;font-size:12px;color:#999"><span class="c">页</span></div>
<div class="a p12" style="left:465px;top:864px;width:46px;height:26px;border:1px solid #eee;border-radius:2px;text-align:center;line-height:27px;font-size:12px;color:#111;background:#fff"><span class="c">确定</span></div>
<div class="a p12" style="left:520px;top:865px;line-height:26px;font-size:12px;color:#333"><span class="c">共</span> 10 <span class="c">条</span></div>
<div class="a p12" style="left:575px;top:864px;width:81px;height:26px;border:1px solid #eee;border-radius:2px;background:#fff;line-height:24px;font-size:12px;color:#000;padding-left:5px">20 <span class="c">条</span>/<span class="c">页</span></div>
<div class="a" style="left:633px;top:868px;width:19px;height:18px;border:1px solid #767676;background:#efefef"></div>
<svg style="left:637px;top:873px" width="11" height="8" viewBox="0 0 11 8" ><path d="M0.8 0.8 L5.5 6 L10.2 0.8" fill="none" stroke="#111" stroke-width="1.8"/></svg>
<div class="a" style="left:0;top:0;width:1874px;height:2px;background:#fff"></div>
<div class="a" style="left:220px;top:1px;width:1654px;height:1px;background:#e4e4e4"></div>
<div class="a" style="left:0;top:0;width:2px;height:931px;background:#fff"></div>
<div class="a" style="left:0;top:929px;width:1874px;height:2px;background:#fff"></div>
<div class="a" style="left:0;top:930px;width:1874px;height:1px;background:#dce7f2"></div>
</body></html>
